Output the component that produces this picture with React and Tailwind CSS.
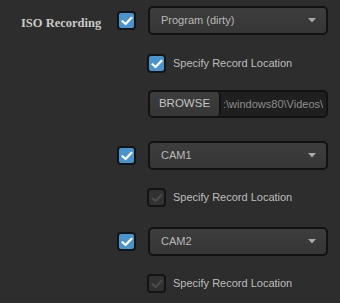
import React from 'react';

function Check({ on = true }) {
  return (
    <div
      className={
        'w-[19px] h-[19px] rounded-[4px] border-2 border-[#141414] flex items-center justify-center shrink-0 ' +
        (on ? 'bg-[#4b93cd]' : 'bg-[#313131]')
      }
    >
      <svg width="12" height="10" viewBox="0 0 12 10">
        <path
          d="M1.5 5.2 L4.6 8 L10.5 1.8"
          fill="none"
          stroke={on ? '#ffffff' : '#4a4a4a'}
          strokeWidth="2.2"
          strokeLinecap="round"
          strokeLinejoin="round"
        />
      </svg>
    </div>
  );
}

function Select({ value }) {
  return (
    <div className="w-[180px] h-[29px] rounded-[5px] border-2 border-[#121212] bg-gradient-to-b from-[#3d3d3d] to-[#363636] flex items-center justify-between pl-[11px] pr-[10px]">
      <span className="text-[11px] text-[#b9b9b9]">{value}</span>
      <svg width="8" height="5" viewBox="0 0 8 5">
        <path d="M0 0 H8 L4 4.5 Z" fill="#a8a8a8" />
      </svg>
    </div>
  );
}

function Sub({ on = true }) {
  return (
    <div className="flex items-center gap-[7px] pl-[147px]">
      <Check on={on} />
      <span className="text-[11px] text-[#bdbdbd]">Specify Record Location</span>
    </div>
  );
}

export default function App() {
  return (
    <div
      className="w-[340px] h-[303px] bg-[#2d2d2d] overflow-hidden flex flex-col pt-[6px]"
      style={{ fontFamily: '"Liberation Sans", Arial, sans-serif' }}
    >
      <div className="flex items-start">
        <div className="w-[117px] pl-[21px] pt-[4px]">
          <span
            className="text-[12.5px] font-bold text-[#c9c9c9]"
            style={{ fontFamily: '"Liberation Serif", "Times New Roman", serif' }}
          >
            ISO Recording
          </span>
        </div>
        <div className="mt-[5px] mr-[12px]">
          <Check />
        </div>
        <Select value="Program (dirty)" />
      </div>

      <div className="mt-[19px]">
        <Sub />
      </div>

      <div className="mt-[17px] pl-[148px]">
        <div className="w-[180px] h-[28px] rounded-[5px] border-2 border-[#121212] bg-[#1f1f1f] flex overflow-hidden">
          <div className="w-[71px] shrink-0 bg-gradient-to-b from-[#3d3d3d] to-[#363636] border-r-2 border-[#121212] rounded-r-[4px] flex items-center justify-center">
            <span className="text-[11.5px] text-[#c4c4c4]">BROWSE</span>
          </div>
          <div className="flex-1 flex items-center pl-[2px]">
            <span className="text-[11px] text-[#8e8e8e] whitespace-nowrap">:\windows80\Videos\</span>
          </div>
        </div>
      </div>

      <div className="mt-[23px] flex items-center">
        <div className="w-[117px]" />
        <div className="mr-[12px]">
          <Check />
        </div>
        <Select value="CAM1" />
      </div>

      <div className="mt-[18px]">
        <Sub on={false} />
      </div>

      <div className="mt-[20px] flex items-center">
        <div className="w-[117px]" />
        <div className="mr-[12px]">
          <Check />
        </div>
        <Select value="CAM2" />
      </div>

      <div className="mt-[18px]">
        <Sub on={false} />
      </div>
    </div>
  );
}
